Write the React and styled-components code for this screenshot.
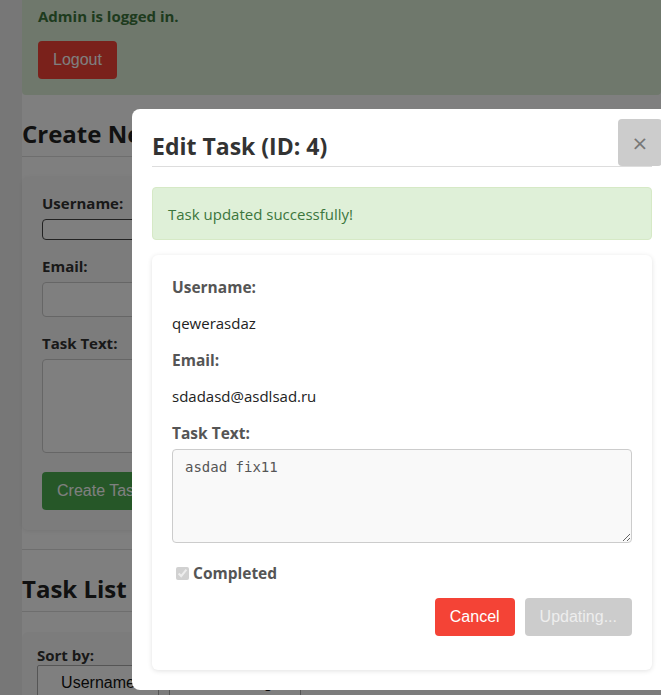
import styled, { createGlobalStyle } from "styled-components";

const GlobalStyle = createGlobalStyle`
  html, body {
    margin: 0;
    padding: 0;
    overflow: hidden;
    background: #efefef;
    font-family: "Open Sans", "Noto Sans", sans-serif;
    color: #333;
  }
`;

const Page = styled.div`
  margin-left: 22px;
  margin-top: -8px;
  background: #fefefe;
  min-height: 720px;
`;

const AuthPanel = styled.div`
  background: #dff0d8;
  border-radius: 4px;
  padding: 14px 16px 16px;
`;

const AuthText = styled.p`
  margin: 0 0 15px;
  font-weight: 700;
  font-size: 15px;
  color: #3c763d;
`;

const Button = styled.button`
  font-family: "Liberation Sans", Arial, sans-serif;
  font-size: 16px;
  border: none;
  border-radius: 4px;
  padding: 0 15px;
  height: 38px;
  background: ${(p) =>
    p.$variant === "danger"
      ? "#f44336"
      : p.$variant === "success"
      ? "#4caf50"
      : "#cccccc"};
  color: ${(p) => (p.$variant === "muted" ? "#eeeeee" : "#fff")};
  margin-top: ${(p) => p.$mt || 0}px;
`;

const SectionTitle = styled.h2`
  margin: 22px 0 20px;
  padding-bottom: 6px;
  font-size: 24px;
  font-weight: 700;
  color: #222;
  border-bottom: 1px solid #ddd;
`;

const FormCard = styled.div`
  background: #f9f9f9;
  border-radius: 6px;
  padding: 16px 20px 20px;
  box-shadow: 0 1px 4px rgba(0, 0, 0, 0.08);
`;

const Label = styled.label`
  display: block;
  font-weight: 700;
  font-size: 15px;
  color: #333;
  margin-bottom: ${(p) => (p.$tight ? 0 : 6)}px;
`;

const Field = styled.div`
  margin-bottom: 16px;
`;

const Input = styled.input`
  display: block;
  width: 100%;
  box-sizing: border-box;
  height: ${(p) => p.$h || 35}px;
  border: 1px solid ${(p) => (p.$dark ? "#444" : "#ccc")};
  border-radius: 4px;
  background: #fff;
`;

const BigText = styled.textarea`
  display: block;
  width: 100%;
  box-sizing: border-box;
  height: 94px;
  border: 1px solid #ccc;
  border-radius: 4px;
  background: #fff;
  resize: vertical;
`;

const Divider = styled.hr`
  border: none;
  border-top: 1px solid #ddd;
  margin: 19px 0 0;
`;

const SortCard = styled.div`
  background: #f9f9f9;
  border-radius: 6px;
  padding: 13px 15px 17px;
`;

const SortRow = styled.div`
  display: flex;
  gap: 10px;
`;

const Select = styled.div`
  width: ${(p) => p.$w || 120}px;
  height: 34px;
  border: 1px solid #aaa;
  border-radius: 2px;
  background: #fff;
  font-family: "Liberation Sans", Arial, sans-serif;
  font-size: 16px;
  display: flex;
  align-items: center;
  justify-content: center;
  color: #111;
`;

const Overlay = styled.div`
  position: fixed;
  inset: 0;
  background: rgba(0, 0, 0, 0.5);
`;

const Modal = styled.div`
  position: absolute;
  left: 132px;
  top: 109px;
  width: 540px;
  box-sizing: border-box;
  padding: 20px;
  background: #fff;
  border-radius: 8px;
`;

const CloseButton = styled.button`
  position: absolute;
  top: 10px;
  right: 10px;
  width: 44px;
  height: 47px;
  border: none;
  border-radius: 4px;
  background: #cccccc;
  color: #777;
  font-size: 20px;
  font-family: "DejaVu Sans", sans-serif;
  line-height: 1;
`;

const ModalTitle = styled.h2`
  margin: 0 0 20px;
  padding: 1px 0 4px;
  font-size: 23px;
  font-weight: 700;
  color: #333;
  border-bottom: 1px solid #ddd;
`;

const Alert = styled.div`
  background: #dff0d8;
  border: 1px solid #d6e9c6;
  border-radius: 4px;
  color: #3c763d;
  font-size: 15px;
  padding: 15.5px 15px;
  margin-bottom: 15px;
`;

const EditCard = styled.div`
  background: #fff;
  border-radius: 6px;
  padding: 21px 20px 20px;
  box-shadow: 0 1px 5px rgba(0, 0, 0, 0.12);
`;

const InfoLabel = styled.div`
  font-weight: 700;
  font-size: 15.5px;
  color: #555;
  margin-bottom: ${(p) => (p.$tight ? 5 : 15)}px;
`;

const InfoValue = styled.div`
  font-size: 15px;
  color: #222;
  margin-bottom: 16px;
`;

const TaskArea = styled.textarea`
  display: block;
  width: 100%;
  box-sizing: border-box;
  height: 94px;
  padding: 9px 12px;
  border: 1px solid #ccc;
  border-radius: 4px;
  background: #f9f9f9;
  color: #555;
  font-family: "DejaVu Sans Mono", "Liberation Mono", monospace;
  font-size: 14px;
  resize: vertical;
`;

const CheckRow = styled.label`
  display: flex;
  align-items: center;
  gap: 1px;
  margin: 19px 0 14px;
  font-weight: 700;
  font-size: 15.5px;
  color: #555;
  input {
    margin: 0 3px 0 4px;
  }
`;

const Actions = styled.div`
  display: flex;
  justify-content: flex-end;
  gap: 10px;
  margin-bottom: 14px;
`;

export default function App() {
  return (
    <>
      <GlobalStyle />
      <Page>
        <AuthPanel>
          <AuthText>Admin is logged in.</AuthText>
          <Button $variant="danger">Logout</Button>
        </AuthPanel>

        <SectionTitle>Create New Task</SectionTitle>
        <FormCard>
          <Field>
            <Label>Username:</Label>
            <Input $h={21} $dark />
          </Field>
          <Field>
            <Label>Email:</Label>
            <Input />
          </Field>
          <Field>
            <Label>Task Text:</Label>
            <BigText />
          </Field>
          <Button $variant="success" $mt={3}>
            Create Task
          </Button>
        </FormCard>
        <Divider />

        <SectionTitle>Task List</SectionTitle>
        <SortCard>
          <Label $tight>Sort by:</Label>
          <SortRow>
            <Select>Username</Select>
            <Select $w={130}>Ascending</Select>
          </SortRow>
        </SortCard>
      </Page>

      <Overlay>
        <Modal>
          <CloseButton>×</CloseButton>
          <ModalTitle>Edit Task (ID: 4)</ModalTitle>
          <Alert>Task updated successfully!</Alert>
          <EditCard>
            <InfoLabel>Username:</InfoLabel>
            <InfoValue>qewerasdaz</InfoValue>
            <InfoLabel>Email:</InfoLabel>
            <InfoValue>sdadasd@asdlsad.ru</InfoValue>
            <InfoLabel $tight>Task Text:</InfoLabel>
            <TaskArea defaultValue="asdad fix11" readOnly />
            <CheckRow>
              <input type="checkbox" checked disabled readOnly />
              Completed
            </CheckRow>
            <Actions>
              <Button $variant="danger">Cancel</Button>
              <Button $variant="muted" disabled>
                Updating...
              </Button>
            </Actions>
          </EditCard>
        </Modal>
      </Overlay>
    </>
  );
}
